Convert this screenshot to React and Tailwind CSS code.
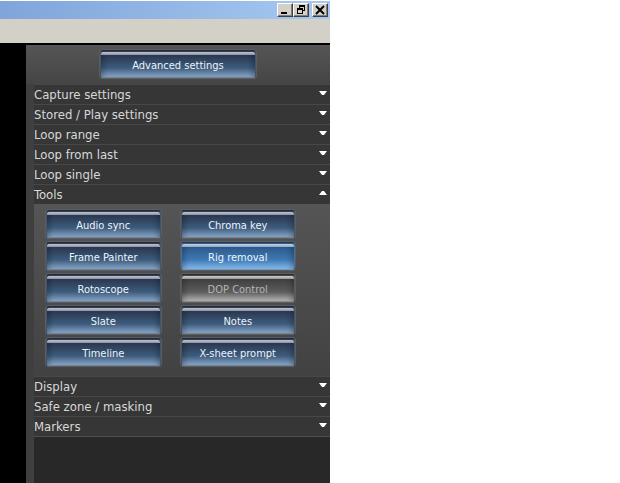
import { useState } from 'react'

const upperSections = [
  'Capture settings',
  'Stored / Play settings',
  'Loop range',
  'Loop from last',
  'Loop single',
]

const lowerSections = ['Display', 'Safe zone / masking', 'Markers']

const tools = [
  { label: 'Audio sync' },
  { label: 'Chroma key' },
  { label: 'Frame Painter' },
  { label: 'Rig removal', variant: 'active' },
  { label: 'Rotoscope' },
  { label: 'DOP Control', variant: 'disabled' },
  { label: 'Slate' },
  { label: 'Notes' },
  { label: 'Timeline' },
  { label: 'X-sheet prompt' },
]

const variants = {
  normal: 'text-[#eef4f8] from-[#2b3c54] via-[#3d5b7d] to-[#8aa6c6] border-t-[#272c38] border-x-[#41546c] border-b-[#70849c]',
  active: 'text-[#eef6fc] from-[#2f5c8e] via-[#3f7ab5] to-[#86baec] border-t-[#273a52] border-x-[#466f9c] border-b-[#7599bd]',
  disabled: 'text-[#b4b4b4] from-[#424242] via-[#5c5c5c] to-[#b4b4b4] border-t-[#303030] border-x-[#585858] border-b-[#8a8a8a]',
}

const glossVariants = {
  normal: 'from-[#c3c5d0] to-[#8c90a2]',
  active: 'from-[#c3d3e6] to-[#8aa6c6]',
  disabled: 'from-[#d0d0d0] to-[#969696]',
}

function GlossyButton({ label, variant = 'normal' }) {
  return (
    <button
      type="button"
      disabled={variant === 'disabled'}
      className={`flex h-7 w-full flex-col overflow-hidden rounded-[3px] border bg-linear-to-b from-20% via-65% text-[11px] leading-4 shadow-[0_0_1px_1px_#5e5f62] ${variants[variant]}`}
    >
      <span className={`mt-px h-[3px] w-full shrink-0 rounded-t-[2px] bg-linear-to-b ${glossVariants[variant]}`} />
      <span className="flex w-full flex-1 items-center justify-center whitespace-nowrap shadow-[inset_6px_0_5px_-3px_#00000038,inset_-6px_0_5px_-3px_#00000038]">
        {label}
      </span>
    </button>
  )
}

function SectionHeader({ label, open = false, onClick }) {
  return (
    <button
      type="button"
      aria-expanded={open}
      onClick={onClick}
      className="flex h-5 w-full items-start justify-between border-t border-[#484848] bg-[#363636] pr-[3px] text-left text-[13px] leading-5 text-[#d8d8d8]"
    >
      <span>{label}</span>
      <svg viewBox="0 0 8 4" className="mt-1.5 h-1 w-2 fill-white" aria-hidden="true">
        <path d={open ? 'M0 4h8L5 0H3z' : 'M0 0h8L5 4H3z'} />
      </svg>
    </button>
  )
}

function CaptionButton({ label, children }) {
  return (
    <button
      type="button"
      aria-label={label}
      className="h-[14px] w-4 border border-t-white border-l-white border-r-[#404040] border-b-[#404040] bg-[#d4d0c8] shadow-[inset_-1px_-1px_0_#808080]"
    >
      <svg viewBox="0 0 14 12" className="h-3 w-[14px]" fill="none" stroke="#000" shapeRendering="crispEdges">
        {children}
      </svg>
    </button>
  )
}

function TitleBar() {
  return (
    <header>
      <div className="mt-px flex h-[18px] items-center justify-end bg-linear-to-r from-[#7fa5da] to-[#a5c9f2] pr-0.5">
        <CaptionButton label="Minimize">
          <path d="M3 9h6" strokeWidth="2" />
        </CaptionButton>
        <CaptionButton label="Restore">
          <path d="M5 2h6M5.500 1v3M10.500 1v6M8 6.500h3M3 5h6M3.500 4v6M8.500 4v6M3 9.500h6" />
          <path d="M5 2h6M3 5h6" strokeWidth="2" />
        </CaptionButton>
        <span className="w-[3px]" />
        <CaptionButton label="Close">
          <path d="M3 2l8 8M11 2l-8 8" strokeWidth="2" shapeRendering="auto" />
        </CaptionButton>
      </div>
      <div className="h-6 bg-[#d3d0c8]" />
    </header>
  )
}

function App() {
  const [toolsOpen, setToolsOpen] = useState(true)

  return (
    <div className="min-h-screen bg-white font-['DejaVu_Sans_Condensed','DejaVu_Sans',sans-serif]">
      <main className="flex min-h-screen w-full max-w-[330px] flex-col">
        <TitleBar />

        <div className="flex flex-1 border-t-2 border-black bg-black pl-[26px]">
          <div className="flex flex-1 flex-col border-l-8 border-[#3f3f3f] bg-[#282828]">
            <div className="-ml-2 flex h-[39px] items-start justify-center bg-linear-to-b from-[#555555] to-[#454545] pt-[5px]">
              <div className="w-[156px]">
                <GlossyButton label="Advanced settings" />
              </div>
            </div>

            {upperSections.map((label) => (
              <SectionHeader key={label} label={label} />
            ))}
            <SectionHeader label="Tools" open={toolsOpen} onClick={() => setToolsOpen(!toolsOpen)} />

            {toolsOpen && (
              <div className="grid grid-cols-2 gap-x-5 gap-y-1 bg-linear-to-b from-[#555555] to-[#424242] pt-1.5 pr-[35px] pb-2.5 pl-3">
                {tools.map((tool) => (
                  <GlossyButton key={tool.label} {...tool} />
                ))}
              </div>
            )}

            {lowerSections.map((label) => (
              <SectionHeader key={label} label={label} />
            ))}
            <div className="h-px bg-[#505050]" />
          </div>
        </div>
      </main>
    </div>
  )
}

export default App
